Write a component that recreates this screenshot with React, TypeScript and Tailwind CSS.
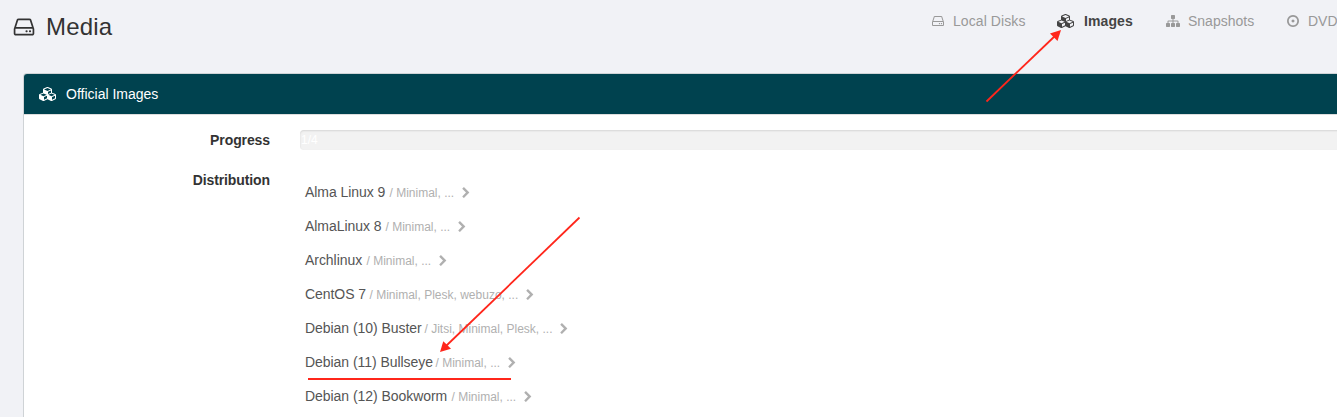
type IconProps = { className?: string };

function Glyph({ d, box = '0 0 1792 1792', className = '' }: { d: string; box?: string; className?: string }) {
  return (
    <svg viewBox={box} fill="currentColor" aria-hidden="true" className={`shrink-0 ${className}`}>
      <path d={d} />
    </svg>
  );
}

const Drive = ({ className }: IconProps) => (
  <Glyph
    className={className}
    d="M1168 1216q0 33-23.5 56.5t-56.5 23.5-56.5-23.5-23.5-56.5 23.5-56.5 56.5-23.5 56.5 23.5 23.5 56.5zm256 0q0 33-23.5 56.5t-56.5 23.5-56.5-23.5-23.5-56.5 23.5-56.5 56.5-23.5 56.5 23.5 23.5 56.5zm112 160v-320q0-13-9.5-22.5t-22.5-9.5h-1216q-13 0-22.5 9.5t-9.5 22.5v320q0 13 9.5 22.5t22.5 9.5h1216q13 0 22.5-9.5t9.5-22.5zm-1230-480h1180l-157-482q-4-13-16-21.5t-26-8.5h-782q-14 0-26 8.5t-16 21.5zm1358 160v320q0 66-47 113t-113 47h-1216q-66 0-113-47t-47-113v-320q0-25 16-75l197-606q17-53 63-86t101-33h782q55 0 101 33t63 86l197 606q16 50 16 75z"
  />
);

const Cubes = ({ className }: IconProps) => (
  <Glyph
    className={className}
    box="0 0 2304 1792"
    d="M640 1632l384-192v-314l-384 164v342zm-64-454l404-173-404-173-404 173zm1088 454l384-192v-314l-384 164v342zm-64-454l404-173-404-173-404 173zm-448-293l384-165v-266l-384 164v267zm-64-379l441-189-441-189-441 189zm1088 518v416q0 36-19 67t-52 47l-448 224q-25 14-57 14t-57-14l-448-224q-4-2-7-4-2 2-7 4l-448 224q-25 14-57 14t-57-14l-448-224q-33-16-52-47t-19-67v-416q0-38 21.5-70t56.5-48l434-186v-400q0-38 21.5-70t56.5-48l448-192q23-10 50-10t50 10l448 192q35 16 56.5 48t21.5 70v400l434 186q36 16 57 48t21 70z"
  />
);

const Sitemap = ({ className }: IconProps) => (
  <Glyph
    className={className}
    d="M1792 1248v320q0 40-28 68t-68 28h-320q-40 0-68-28t-28-68v-320q0-40 28-68t68-28h96v-192h-512v192h96q40 0 68 28t28 68v320q0 40-28 68t-68 28h-320q-40 0-68-28t-28-68v-320q0-40 28-68t68-28h96v-192h-512v192h96q40 0 68 28t28 68v320q0 40-28 68t-68 28h-320q-40 0-68-28t-28-68v-320q0-40 28-68t68-28h96v-192q0-52 38-90t90-38h512v-192h-96q-40 0-68-28t-28-68v-320q0-40 28-68t68-28h320q40 0 68 28t28 68v320q0 40-28 68t-68 28h-96v192h512q52 0 90 38t38 90v192h96q40 0 68 28t28 68z"
  />
);

const Disc = ({ className }: IconProps) => (
  <Glyph
    className={className}
    d="M1088 896q0 80-56 136t-136 56-136-56-56-136 56-136 136-56 136 56 56 136zm-192-544q-148 0-273 73t-198 198-73 273 73 273 198 198 273 73 273-73 198-198 73-273-73-273-198-198-273-73zm768 544q0 209-103 385.5t-279.5 279.5-385.5 103-385.5-103-279.5-279.5-103-385.5 103-385.5 279.5-279.5 385.5-103 385.5 103 279.5 279.5 103 385.5z"
  />
);

const Chevron = ({ className }: IconProps) => (
  <Glyph
    className={className}
    d="M1363 877l-742 742q-19 19-45 19t-45-19l-166-166q-19-19-19-45t19-45l531-531-531-531q-19-19-19-45t19-45l166-166q19-19 45-19t45 19l742 742q19 19 19 45t-19 45z"
  />
);

const distributions = [
  { name: 'Alma Linux 9', variants: 'Minimal, ...', nameWidth: 'w-[84.5px]', variantsWidth: 'w-[70.5px]' },
  { name: 'AlmaLinux 8', variants: 'Minimal, ...', nameWidth: 'w-[80.5px]', variantsWidth: 'w-[70.5px]' },
  { name: 'Archlinux', variants: 'Minimal, ...', nameWidth: 'w-[61.5px]', variantsWidth: 'w-[70.5px]' },
  { name: 'CentOS 7', variants: 'Minimal, Plesk, webuzo, ...', nameWidth: 'w-[64.5px]', variantsWidth: 'w-[154.5px]' },
  { name: 'Debian (10) Buster', variants: 'Jitsi, Minimal, Plesk, ...', nameWidth: 'w-[119.5px]', variantsWidth: 'w-[133.5px]' },
  { name: 'Debian (11) Bullseye', variants: 'Minimal, ...', nameWidth: 'w-[130.5px]', variantsWidth: 'w-[70.5px]' },
  { name: 'Debian (12) Bookworm', variants: 'Minimal, ...', nameWidth: 'w-[146.5px]', variantsWidth: 'w-[70.5px]' },
];

export default function App() {
  return (
    <div className="relative flex h-[417px] w-full flex-col overflow-hidden bg-[#f1f2f6] font-['Liberation_Sans',Arial,sans-serif] text-sm whitespace-nowrap text-[#333]">
      <header className="flex h-[73px] shrink-0 justify-between">
        <h1 className="flex h-[54px] items-center pl-3 text-2xl tracking-[0.2px]">
          <Drive className="mr-[10px] size-6" />
          Media
        </h1>
        <nav className="flex h-[42px] w-[406px] shrink-0 items-center overflow-hidden text-[#999]">
          <a className="flex w-[126px] shrink-0 items-center tracking-[0.08px]">
            <Drive className="mr-2 size-[14px]" />
            Local Disks
          </a>
          <a className="flex w-[108.5px] shrink-0 items-center font-bold tracking-[0.1px] text-[#444]">
            <Cubes className="mr-[9px] h-[14px] w-[18px]" />
            Images
          </a>
          <a className="flex w-[120.5px] shrink-0 items-center">
            <Sitemap className="mr-[8.5px] size-[14px]" />
            Snapshots
          </a>
          <a className="flex shrink-0 items-center">
            <Disc className="mr-2 size-[14px]" />
            DVD
          </a>
        </nav>
      </header>

      <section className="ml-[23px] flex grow flex-col overflow-hidden rounded-tl border-t border-l border-[#cfd3d6] bg-white">
        <h2 className="flex h-10 shrink-0 items-center bg-[#00424f] pl-[15px] text-white">
          <Cubes className="mr-[9px] h-[14px] w-[18px]" />
          Official Images
        </h2>
        <div className="flex h-[50px] shrink-0 border-t border-[#ddd] pt-[15px]">
          <div className="w-[246px] shrink-0 text-right leading-5 font-bold tracking-[-0.1px]">Progress</div>
          <div className="-mr-1 ml-[30px] h-5 grow rounded-l bg-[#f2f2f2] pl-px text-xs leading-5 text-white shadow-[inset_0_1px_2px_rgba(0,0,0,0.12)]">
            1/4
          </div>
        </div>
        <div className="flex grow pt-[11px]">
          <div className="w-[246px] shrink-0 text-right leading-[10px] font-bold tracking-[-0.1px]">Distribution</div>
          <ul className="ml-[35px]">
            {distributions.map(({ name, variants, nameWidth, variantsWidth }) => (
              <li key={name} className="flex h-[34px] items-center text-[#555]">
                <span className={`shrink-0 tracking-[-0.05px] ${nameWidth}`}>{name}</span>
                <span className={`shrink-0 pt-0.5 text-xs text-[#b0b0b0] ${variantsWidth}`}>/ {variants}</span>
                <Chevron className="mt-px size-3 text-[#b0b0b0]" />
              </li>
            ))}
          </ul>
        </div>
      </section>

      <svg className="pointer-events-none absolute inset-0" width="1337" height="417" fill="#ff261b" stroke="#ff261b">
        <path d="M986.5 101.5 1056 35" strokeWidth="1.8" />
        <path d="M1061 30 1057.5 41 1050 33.5Z" strokeWidth="0" />
        <path d="M579.5 217.5 446 346" strokeWidth="1.8" />
        <path d="M440 352 443.3 341.2 451 348.8Z" strokeWidth="0" />
        <path d="M308 379H511" strokeWidth="2" />
      </svg>
    </div>
  );
}
